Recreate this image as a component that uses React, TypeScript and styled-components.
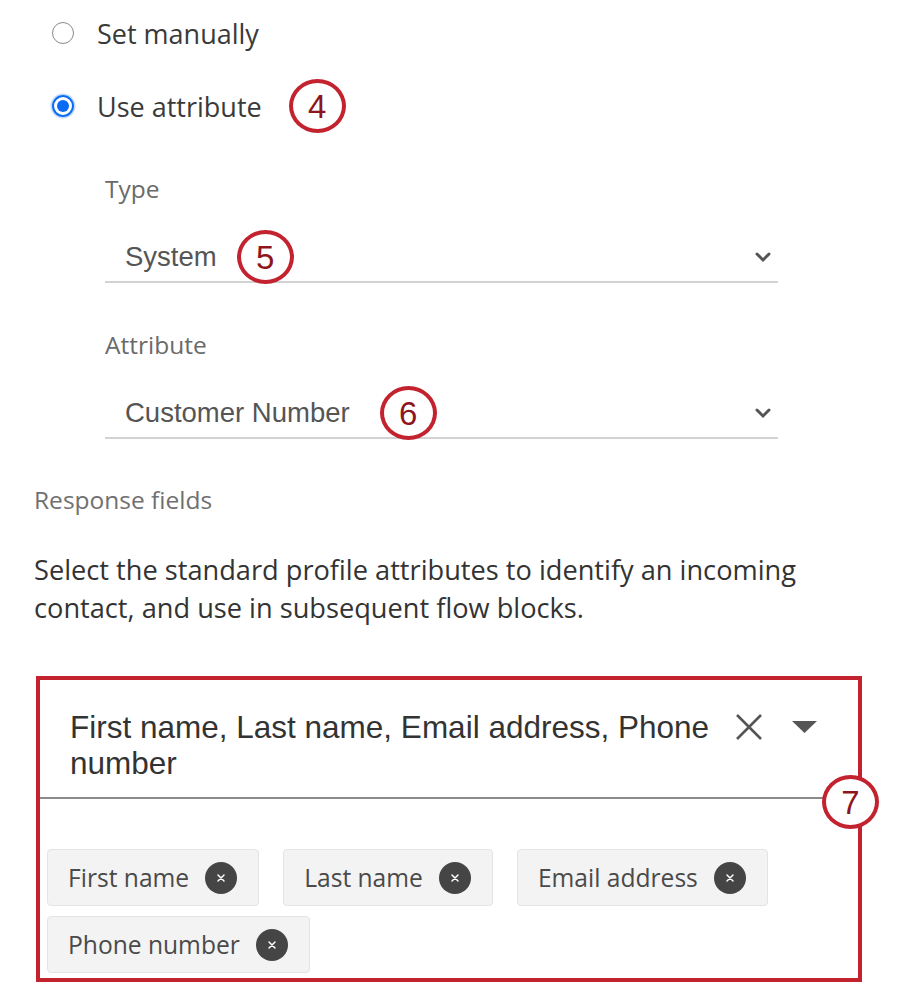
import React from "react";
import styled, { createGlobalStyle } from "styled-components";

const Global = createGlobalStyle`
  html, body { margin: 0; padding: 0; background: #fff; }
  body { font-family: "Open Sans", "Noto Sans", sans-serif; }
`;

const Page = styled.div`
  width: 900px;
  height: 994px;
  box-sizing: border-box;
  padding: 0 38px 0 34px;
  position: relative;
  overflow: hidden;
`;

const RadioGroup = styled.div`
  display: flex;
  flex-direction: column;
  gap: 27px;
  padding: 10px 0 0 18px;
`;

const RadioRow = styled.div`
  display: flex;
  align-items: center;
  height: 46px;
  gap: 23px;
`;

const RadioCircle = styled.span<{ $checked?: boolean }>`
  width: 22px;
  height: 22px;
  box-sizing: border-box;
  border-radius: 50%;
  border: ${(p) => (p.$checked ? "2px solid #0a6cf5" : "1.5px solid #8a8a8a")};
  box-shadow: ${(p) => (p.$checked ? "0 0 0 1.5px rgba(10,108,245,0.25)" : "none")};
  display: flex;
  align-items: center;
  justify-content: center;
  &::after {
    content: "";
    display: ${(p) => (p.$checked ? "block" : "none")};
    width: 12px;
    height: 12px;
    border-radius: 50%;
    background: #0a6cf5;
  }
`;

const RadioLabel = styled.span`
  font-size: 27px;
  color: #3a3a3a;
`;

const Annot = styled.span<{ $gap?: number }>`
  display: inline-flex;
  align-items: center;
  justify-content: center;
  width: 57px;
  height: 54px;
  box-sizing: border-box;
  border: 4px solid #c3222f;
  border-radius: 50%;
  background: #fff;
  color: #8e1520;
  font-family: "Liberation Sans", Arial, sans-serif;
  font-size: 33px;
  line-height: 1;
  flex: none;
  margin-left: ${(p) => p.$gap ?? 0}px;
`;

const AttrBlock = styled.div`
  padding: 45px 0 0 71px;
  display: flex;
  flex-direction: column;
`;

const Field = styled.div`
  display: flex;
  flex-direction: column;
  width: 673px;
  & + & { margin-top: 47px; }
`;

const FieldLabel = styled.div`
  font-size: 24.5px;
  line-height: 30px;
  color: #6a6a6a;
  margin-bottom: 29px;
`;

const SelectBox = styled.div`
  height: 50px;
  box-sizing: border-box;
  border-bottom: 2px solid #d2d2d2;
  display: flex;
  align-items: center;
  padding: 0 7px 0 20px;
`;

const SelectValue = styled.span`
  font-family: "Liberation Sans", Arial, sans-serif;
  font-size: 27.5px;
  color: #555;
`;

const Spacer = styled.span`
  flex: 1;
`;

const Chevron = () => (
  <svg width="16" height="12" viewBox="0 0 16 12">
    <path d="M2 3 L8 9 L14 3" stroke="#555" strokeWidth="3" fill="none" strokeLinecap="round" />
  </svg>
);

const SectionTitle = styled.div`
  margin-top: 46px;
  font-size: 24.5px;
  line-height: 30px;
  color: #707070;
`;

const Paragraph = styled.p`
  margin: 36px 0 0;
  font-size: 27.2px;
  line-height: 38px;
  color: #333;
  white-space: nowrap;
`;

const MultiBox = styled.div`
  margin: 49px 0 0 2px;
  width: 826px;
  height: 306px;
  box-sizing: border-box;
  border: 4px solid #c3222f;
  position: relative;
  display: flex;
  flex-direction: column;
`;

const MultiHeader = styled.div`
  display: flex;
  align-items: flex-start;
  padding: 29px 40px 0 30px;
  height: 119px;
  box-sizing: border-box;
  border-bottom: 2px solid #8a8a8a;
`;

const MultiText = styled.div`
  font-family: "Liberation Sans", Arial, sans-serif;
  font-size: 31.5px;
  line-height: 36px;
  color: #333;
  width: 650px;
`;

const HeaderIcons = styled.div`
  display: flex;
  align-items: center;
  gap: 28px;
  margin-left: 14px;
  height: 36px;
`;

const ChipArea = styled.div`
  display: flex;
  flex-wrap: wrap;
  gap: 10px 24px;
  padding: 50px 20px 0 7px;
`;

const Chip = styled.div`
  height: 57px;
  box-sizing: border-box;
  display: flex;
  align-items: center;
  gap: 16px;
  padding: 0 21px 0 20px;
  background: #f3f3f3;
  border: 1px solid #e4e4e4;
  border-radius: 4px;
  font-size: 24.6px;
  color: #4a4a4a;
`;

const ChipClose = styled.span`
  width: 32px;
  height: 32px;
  border-radius: 50%;
  background: #454545;
  display: flex;
  align-items: center;
  justify-content: center;
`;

const Badge7 = styled(Annot)`
  position: absolute;
  right: -21px;
  top: 95px;
`;

const ChipX = () => (
  <svg width="10" height="10" viewBox="0 0 10 10">
    <path d="M2 2 L8 8 M8 2 L2 8" stroke="#fff" strokeWidth="1.5" strokeLinecap="round" />
  </svg>
);

const chips = ["First name", "Last name", "Email address", "Phone number"];

export default function App() {
  return (
    <>
      <Global />
      <Page>
        <RadioGroup>
          <RadioRow>
            <RadioCircle />
            <RadioLabel>Set manually</RadioLabel>
          </RadioRow>
          <RadioRow>
            <RadioCircle $checked />
            <RadioLabel>Use attribute</RadioLabel>
            <Annot $gap={4}>4</Annot>
          </RadioRow>
        </RadioGroup>
        <AttrBlock>
          <Field>
            <FieldLabel>Type</FieldLabel>
            <SelectBox>
              <SelectValue>System</SelectValue>
              <Annot $gap={20}>5</Annot>
              <Spacer />
              <Chevron />
            </SelectBox>
          </Field>
          <Field>
            <FieldLabel>Attribute</FieldLabel>
            <SelectBox>
              <SelectValue>Customer Number</SelectValue>
              <Annot $gap={30}>6</Annot>
              <Spacer />
              <Chevron />
            </SelectBox>
          </Field>
        </AttrBlock>
        <SectionTitle>Response fields</SectionTitle>
        <Paragraph>
          Select the standard profile attributes to identify an incoming
          <br />
          contact, and use in subsequent flow blocks.
        </Paragraph>
        <MultiBox>
          <MultiHeader>
            <MultiText>First name, Last name, Email address, Phone number</MultiText>
            <HeaderIcons>
              <svg width="30" height="28" viewBox="0 0 30 28">
                <path d="M3 2 L27 26 M27 2 L3 26" stroke="#555" strokeWidth="2.6" />
              </svg>
              <svg width="25" height="12" viewBox="0 0 25 12">
                <path d="M0 0 L25 0 L12.5 12 Z" fill="#555" />
              </svg>
            </HeaderIcons>
          </MultiHeader>
          <ChipArea>
            {chips.map((c) => (
              <Chip key={c}>
                {c}
                <ChipClose>
                  <ChipX />
                </ChipClose>
              </Chip>
            ))}
          </ChipArea>
          <Badge7>7</Badge7>
        </MultiBox>
      </Page>
    </>
  );
}
